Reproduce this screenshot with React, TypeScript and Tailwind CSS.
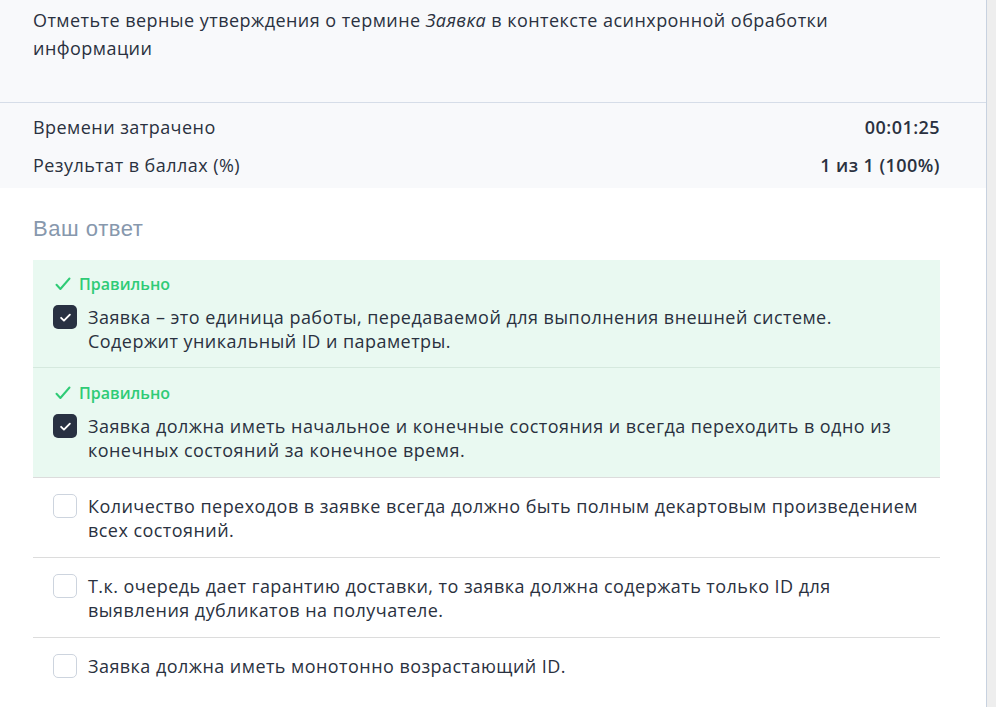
import { type ReactElement } from 'react';

interface AnswerOption {
  text: string;
  checked: boolean;
  correct: boolean;
}

const OPTIONS: AnswerOption[] = [
  {
    text: 'Заявка – это единица работы, передаваемой для выполнения внешней системе. Содержит уникальный ID и параметры.',
    checked: true,
    correct: true,
  },
  {
    text: 'Заявка должна иметь начальное и конечные состояния и всегда переходить в одно из конечных состояний за конечное время.',
    checked: true,
    correct: true,
  },
  {
    text: 'Количество переходов в заявке всегда должно быть полным декартовым произведением всех состояний.',
    checked: false,
    correct: false,
  },
  {
    text: 'Т.к. очередь дает гарантию доставки, то заявка должна содержать только ID для выявления дубликатов на получателе.',
    checked: false,
    correct: false,
  },
  {
    text: 'Заявка должна иметь монотонно возрастающий ID.',
    checked: false,
    correct: false,
  },
];

function Checkbox({ checked }: { checked: boolean }): ReactElement {
  if (checked) {
    return (
      <span className="flex h-6 w-6 shrink-0 items-center justify-center rounded-[5px] bg-[#283142]">
        <svg viewBox="0 0 24 24" className="h-[15px] w-[15px]" fill="none" stroke="white" strokeWidth={3} strokeLinecap="round" strokeLinejoin="round">
          <path d="M5 12.5l4.5 4.5L19 7.5" />
        </svg>
      </span>
    );
  }
  return <span className="h-6 w-6 shrink-0 rounded-[5px] border border-[#cdd4de] bg-white" />;
}

function OptionRow({ option, first }: { option: AnswerOption; first: boolean }): ReactElement {
  // vertical padding differs slightly between the first, the graded and the plain rows
  const padding = first ? 'pt-[14px] pb-[14px]' : option.correct ? 'pt-[15px] pb-[15px]' : 'pt-[16px] pb-[15px]';
  return (
    <li
      className={
        (option.correct ? 'bg-[#e9f9f1] ' : 'bg-white ') +
        (first ? '' : 'border-t ') +
        (option.correct ? 'border-[#d5e9de] ' : 'border-[#dcdcdc] ') +
        'pl-5 pr-[17px] ' +
        padding
      }
    >
      {option.correct && (
        <div className="mb-[11px] flex h-5 items-center gap-[8px] text-[16px] font-semibold text-[#2fcb76]">
          <svg viewBox="0 0 16 16" className="ml-[2px] h-4 w-4" fill="none" stroke="currentColor" strokeWidth={2} strokeLinecap="round" strokeLinejoin="round">
            <path d="M1.5 8.8l3.9 4.2L14.5 2.5" />
          </svg>
          Правильно
        </div>
      )}
      <div className="flex gap-[11px]">
        <Checkbox checked={option.checked} />
        <p className="text-[18px] leading-6 tracking-wide text-[#2a3140]">{option.text}</p>
      </div>
    </li>
  );
}

export default function App(): ReactElement {
  return (
    <div className="flex h-[707px] w-[996px] overflow-hidden bg-[#eeeeee]" style={{ fontFamily: '"Open Sans", "Noto Sans", sans-serif' }}>
      <main className="h-full w-[987px] border-r border-[#c8d2e0] bg-white">
        <header className="h-[103px] border-b border-[#d6dde8] bg-[#f8f9fb] pl-[33px] pr-[46px] pt-[6px]">
          <h1 className="text-[18px] leading-7 tracking-wide text-[#2a3140]">
            Отметьте верные утверждения о термине <em>Заявка</em> в контексте асинхронной обработки информации
          </h1>
        </header>

        <dl className="flex flex-col gap-[14px] bg-[#f8f9fb] pb-[11px] pl-[33px] pr-[46px] pt-[12px] text-[18px] leading-6 tracking-wide text-[#2a3140]">
          <div className="flex justify-between">
            <dt>Времени затрачено</dt>
            <dd className="font-semibold">00:01:25</dd>
          </div>
          <div className="flex justify-between">
            <dt>Результат в баллах (%)</dt>
            <dd className="font-semibold">1 из 1 (100%)</dd>
          </div>
        </dl>

        <section className="pl-[33px] pr-[46px] pt-[27px]">
          <h2 className="mb-[17px] text-[22px] leading-7 tracking-wide text-[#8798ad]" style={{ fontFamily: '"Liberation Sans", Arial, sans-serif' }}>
            Ваш ответ
          </h2>
          <ul>
            {OPTIONS.map((option, index) => (
              <OptionRow key={index} option={option} first={index === 0} />
            ))}
          </ul>
        </section>
      </main>
    </div>
  );
}
